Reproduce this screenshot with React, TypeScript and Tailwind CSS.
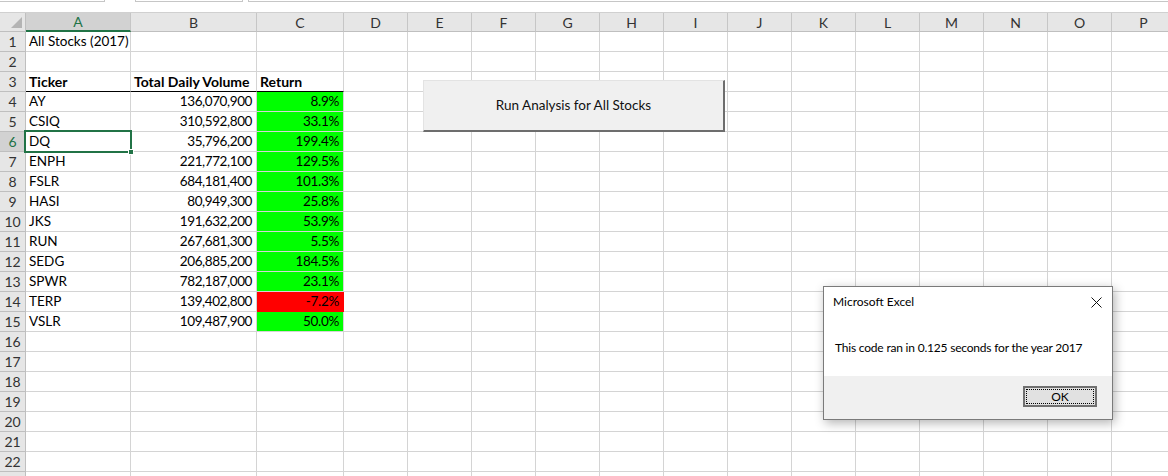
import React from "react";

const COLS = ["A", "B", "C", "D", "E", "F", "G", "H", "I", "J", "K", "L", "M", "N", "O", "P"];
// widths include the 1px right gridline
const WIDTHS = ["w-[105px]", "w-[126px]", "w-[87px]", "w-[64px]", "w-[64px]", "w-[64px]", "w-[64px]", "w-[64px]", "w-[64px]", "w-[64px]", "w-[64px]", "w-[64px]", "w-[64px]", "w-[64px]", "w-[64px]", "w-[64px]"];

type Stock = { ticker: string; volume: string; ret: string; neg?: boolean };

const stocks: Stock[] = [
  { ticker: "AY", volume: "136,070,900", ret: "8.9%" },
  { ticker: "CSIQ", volume: "310,592,800", ret: "33.1%" },
  { ticker: "DQ", volume: "35,796,200", ret: "199.4%" },
  { ticker: "ENPH", volume: "221,772,100", ret: "129.5%" },
  { ticker: "FSLR", volume: "684,181,400", ret: "101.3%" },
  { ticker: "HASI", volume: "80,949,300", ret: "25.8%" },
  { ticker: "JKS", volume: "191,632,200", ret: "53.9%" },
  { ticker: "RUN", volume: "267,681,300", ret: "5.5%" },
  { ticker: "SEDG", volume: "206,885,200", ret: "184.5%" },
  { ticker: "SPWR", volume: "782,187,000", ret: "23.1%" },
  { ticker: "TERP", volume: "139,402,800", ret: "-7.2%", neg: true },
  { ticker: "VSLR", volume: "109,487,900", ret: "50.0%" },
];

const font = { fontFamily: "Lato, 'Liberation Sans', sans-serif" };

const RowHeader: React.FC<{ n?: number; selected?: boolean }> = ({ n, selected }) => (
  <div
    className={`w-[26px] shrink-0 h-full flex items-center justify-center border-r border-b border-[#bfbfbf] text-[14px] ${
      selected ? "bg-[#d2d2d2] text-[#217346]" : "bg-[#e6e6e6] text-[#333]"
    }`}
  >
    {n}
  </div>
);

const Cell: React.FC<{ i: number; children?: React.ReactNode; className?: string }> = ({ i, children, className }) => (
  <div className={`${WIDTHS[i]} shrink-0 h-full border-r border-b border-[#d4d4d4] px-[3px] flex items-center overflow-visible whitespace-nowrap ${className ?? ""}`}>
    {children}
  </div>
);

const Row: React.FC<{ n?: number; cells?: Record<number, React.ReactNode>; classes?: Record<number, string> }> = ({ n, cells = {}, classes = {} }) => (
  <div className="flex h-[20px] shrink-0">
    <RowHeader n={n} selected={n === 6} />
    {COLS.map((_, i) => (
      <Cell key={i} i={i} className={classes[i]}>
        {cells[i]}
      </Cell>
    ))}
  </div>
);

export default function App() {
  return (
    <div className="relative w-[1168px] h-[476px] overflow-hidden bg-white text-black text-[13.5px]" style={font}>
      {/* formula bar remnant */}
      <div className="flex h-[12px] gap-[30px]">
        <div className="w-[107px] h-[2px] border-b border-r border-[#c6c6c6]" />
        <div className="flex gap-[5px]">
          <div className="w-[108px] h-[2px] border-b border-x border-[#c6c6c6]" />
          <div className="w-[920px] h-[2px] border-b border-l border-[#c6c6c6]" />
        </div>
      </div>

      {/* column headers */}
      <div className="flex h-[20px] bg-[#e6e6e6] border-t border-[#d0d0d0] text-[14px]">
        <div className="w-[26px] shrink-0 h-full border-r border-b border-[#bfbfbf] relative">
          <div className="absolute right-[3px] bottom-[3px] w-0 h-0 border-l-[11px] border-l-transparent border-b-[11px] border-b-[#b4b4b4]" />
        </div>
        {COLS.map((c, i) => (
          <div
            key={c}
            className={`${WIDTHS[i]} shrink-0 h-full flex items-center justify-center border-r border-[#c6c6c6] ${
              i === 0 ? "bg-[#d2d2d2] text-[#217346] border-b-2 border-b-[#217346]" : "text-[#333] border-b border-b-[#bfbfbf]"
            }`}
          >
            {c}
          </div>
        ))}
      </div>

      <Row n={1} cells={{ 0: "All Stocks (2017)" }} />
      <Row n={2} />
      <Row
        n={3}
        cells={{ 0: "Ticker", 1: "Total Daily Volume", 2: "Return" }}
        classes={{ 0: "font-bold text-[14px] border-b-black", 1: "font-bold text-[14px] border-b-black", 2: "font-bold text-[14px] border-b-black" }}
      />
      {stocks.map((s, idx) => (
        <Row
          key={s.ticker}
          n={idx + 4}
          cells={{ 0: s.ticker, 1: s.volume, 2: s.ret }}
          classes={{
            1: "justify-end tracking-[-0.4px] pr-[4px]",
            2: s.neg
              ? "justify-end tracking-[-0.3px] pr-[4px] bg-[#ff0000] border-[#ff0000]"
              : "justify-end tracking-[-0.3px] pr-[4px] bg-[#00ff00] border-[#00ff00]",
          }}
        />
      ))}
      {[16, 17, 18, 19, 20, 21, 22].map((n) => (
        <Row key={n} n={n} />
      ))}
      <Row />

      {/* active cell A6 */}
      <div className="absolute left-[24px] top-[130px] w-[108px] h-[23px] border-2 border-[#217346]">
        <div className="absolute -right-[4px] -bottom-[4px] w-[6px] h-[6px] bg-[#217346] border border-white" />
      </div>

      {/* form button */}
      <div className="absolute left-[423px] top-[80px] w-[302px] h-[52px] bg-[#f0f0f0] border-t border-l border-[#e3e3e3] border-r-2 border-b-2 border-r-[#6d6d6d] border-b-[#6d6d6d] flex items-center justify-center text-[13.5px] text-[#111]">
        Run Analysis for All Stocks
      </div>

      {/* message box */}
      <div
        className="absolute left-[823px] top-[286px] w-[290px] h-[134px] bg-white border border-[#7a7a7a] shadow-[2px_3px_10px_rgba(0,0,0,0.3)] flex flex-col text-[12px]"
        style={{ fontFamily: "Lato, 'Noto Sans', sans-serif" }}
      >
        <div className="flex items-center justify-between h-[30px] pl-[9px] pr-[10px]">
          <span>Microsoft Excel</span>
          <svg width="11" height="11" viewBox="0 0 11 11" className="mt-[1px]">
            <path d="M0.5 0.5 L10.5 10.5 M10.5 0.5 L0.5 10.5" stroke="#111" strokeWidth="1" />
          </svg>
        </div>
        <div className="flex-1 pl-[11px] pt-[22px] tracking-[-0.2px]">This code ran in 0.125 seconds for the year 2017</div>
        <div className="h-[43px] bg-[#f0f0f0] flex items-start justify-end pt-[10px] pr-[15px]">
          <div className="w-[74px] h-[21px] bg-[#e1e1e1] border-2 border-[#707070] flex items-center justify-center p-[1px]">
            <div className="w-full h-full border border-dotted border-black flex items-center justify-center leading-none">OK</div>
          </div>
        </div>
      </div>
    </div>
  );
}
